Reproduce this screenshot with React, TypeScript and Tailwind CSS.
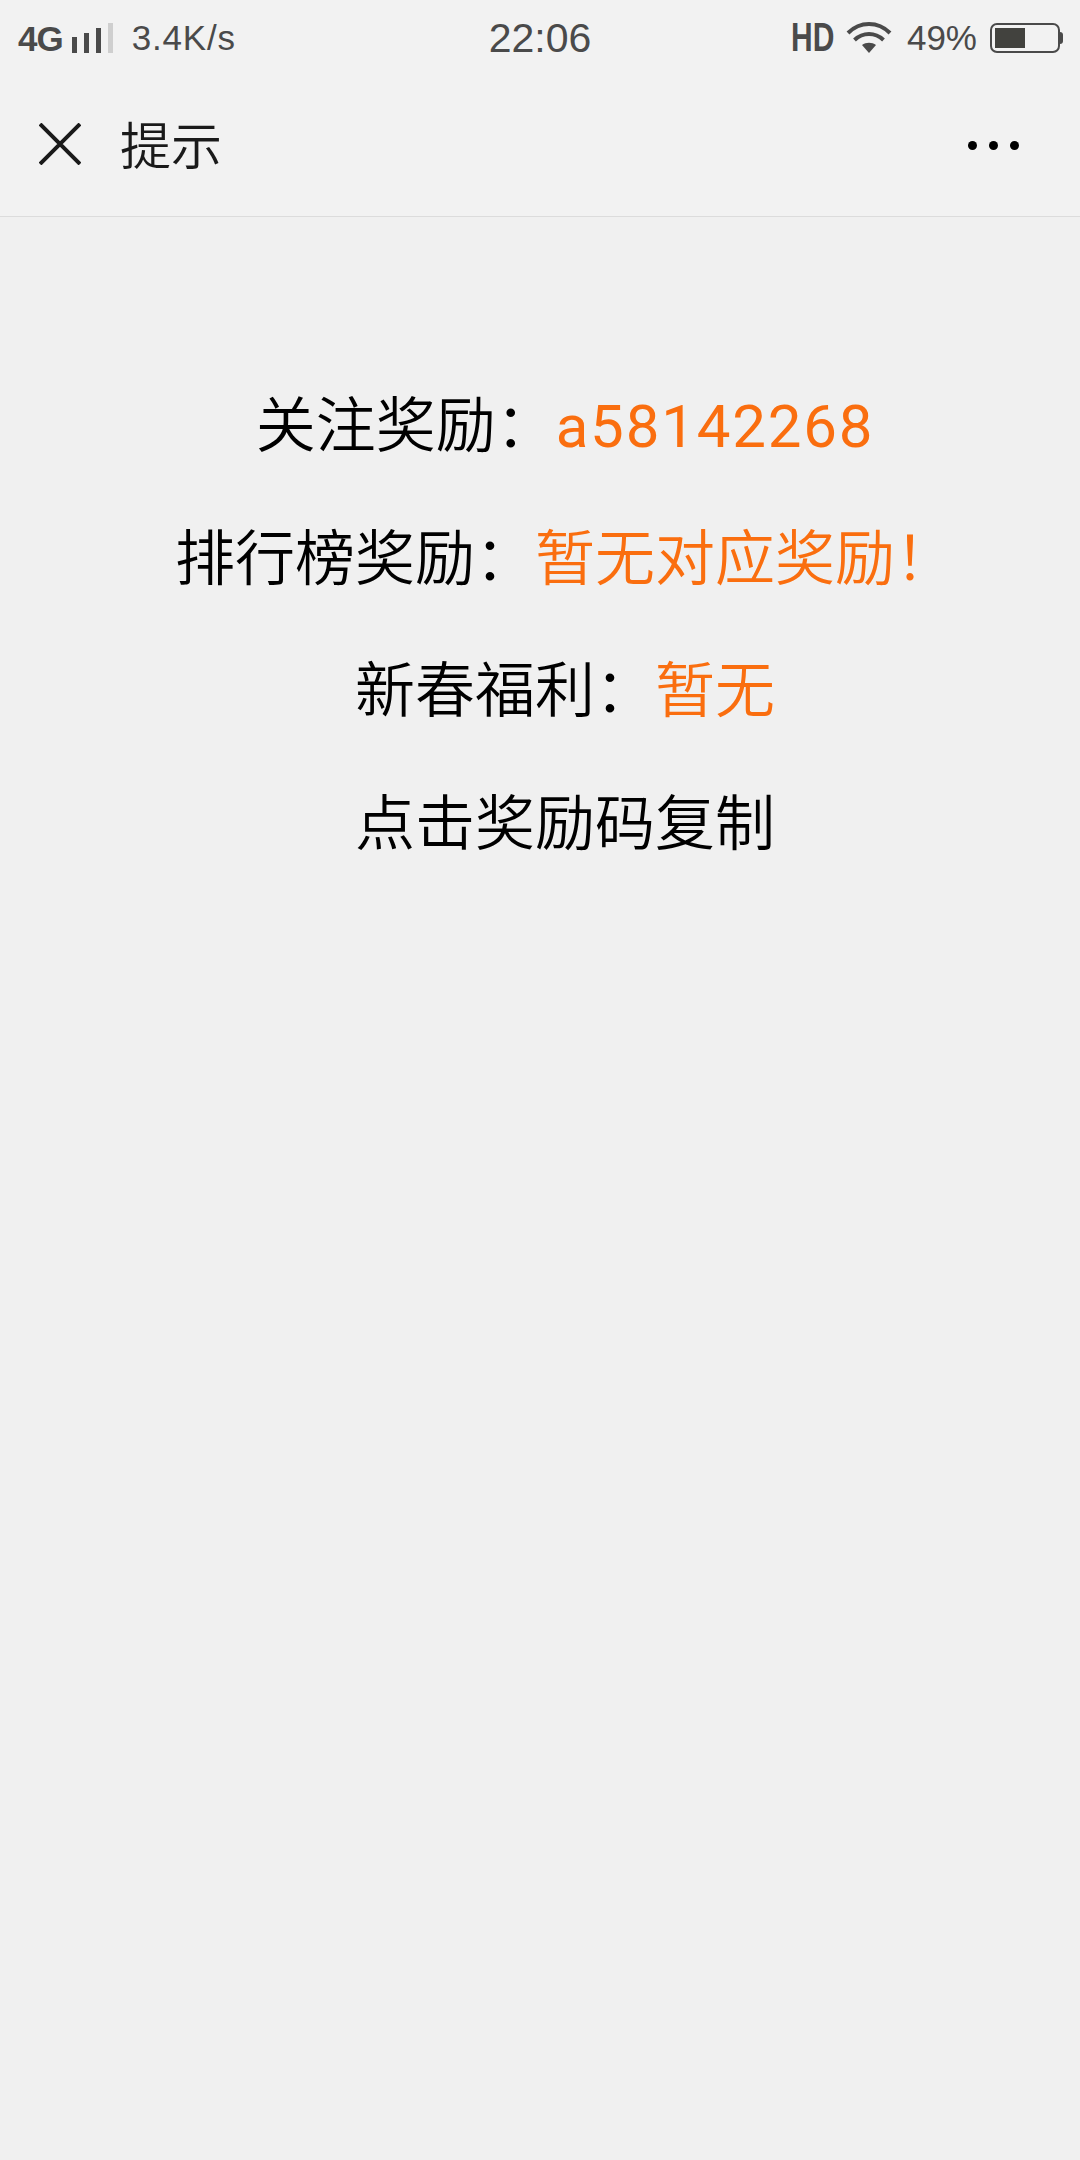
import React from 'react'

const rows = [
  { label: '关注奖励：', value: 'a58142268', latin: true },
  { label: '排行榜奖励：', value: '暂无对应奖励！', latin: false },
  { label: '新春福利：', value: '暂无', latin: false },
  { label: '点击奖励码复制', value: '', latin: false },
]

function SignalBars() {
  return (
    <div className="flex items-end gap-[7px] h-[30px] ml-[9px]">
      <div className="w-[5px] h-[16px] bg-[#4a4a4a]"></div>
      <div className="w-[5px] h-[20px] bg-[#4a4a4a]"></div>
      <div className="w-[5px] h-[25px] bg-[#4a4a4a]"></div>
      <div className="w-[5px] h-[30px] bg-[#cfcfcf]"></div>
    </div>
  )
}

function WifiIcon() {
  return (
    <svg width="46" height="32" viewBox="0 0 46 32" fill="none" stroke="#4a4a4a" strokeWidth="4">
      <path d="M2 11 C14 -1 32 -1 44 11" />
      <path d="M8.500 18 C17 10 29 10 37.500 18" />
      <path d="M16 23 C20 20 26 20 30 23 L23 31 Z" fill="#4a4a4a" stroke="none" />
    </svg>
  )
}

function Battery() {
  return (
    <div className="flex items-center">
      <div className="w-[70px] h-[30px] rounded-[7px] border-[2px] border-[#4a4a4a] p-[3px]">
        <div className="w-[30px] h-full bg-[#42423e]"></div>
      </div>
      <div className="w-[3px] h-[12px] rounded-r-[3px] bg-[#4a4a4a]"></div>
    </div>
  )
}

export default function App() {
  return (
    <div className="min-h-[2160px] bg-[#f0f0f0] font-['Liberation_Sans','Noto_Sans_CJK_SC',sans-serif]">
      {/* Status bar */}
      <div className="bg-[#f2f2f2] h-[76px] grid grid-cols-[1fr_auto_1fr] items-center text-[#4a4a4a] px-[18px]">
        <div className="flex items-center whitespace-nowrap">
          <span className="text-[35px] font-bold leading-none tracking-[-1px]">4G</span>
          <SignalBars />
          <span className="text-[35px] leading-none ml-[19px] tracking-[0.8px] -mt-[2px]">3.4K/s</span>
        </div>
        <div className="text-center text-[41px] leading-none">22:06</div>
        <div className="flex items-center justify-end whitespace-nowrap -mr-[1px]">
          <span className="w-[43px] text-[40px] font-bold leading-none scale-x-[0.75] origin-left -mt-[2px]">HD</span>
          <div className="ml-[12px]"><WifiIcon /></div>
          <span className="text-[35px] leading-none ml-[15px] -mt-[2px]">49%</span>
          <div className="ml-[13px]"><Battery /></div>
        </div>
      </div>

      {/* Nav */}
      <div className="bg-[#f2f2f2] h-[141px] border-b border-[#dcdcdc] flex items-center justify-between pl-[39px] pr-[61px] pb-[5px]">
        <div className="flex items-center">
          <svg width="42" height="42" viewBox="0 0 42 42" stroke="#1a1a1a" strokeWidth="4" fill="none">
            <path d="M1 1 L41 41 M41 1 L1 41" />
          </svg>
          <span className="ml-[39px] mt-[8px] text-[51px] leading-none text-[#1a1a1a] font-[350]">提示</span>
        </div>
        <div className="flex items-center gap-[12px] mt-[4px]">
          <div className="w-[9px] h-[9px] rounded-full bg-black"></div>
          <div className="w-[9px] h-[9px] rounded-full bg-black"></div>
          <div className="w-[9px] h-[9px] rounded-full bg-black"></div>
        </div>
      </div>

      {/* Reward rows */}
      <div className="pt-[144px] pl-[50px] text-center text-[60px] leading-[132.5px] text-black font-[350]">
        {rows.map((row) => (
          <div key={row.label} className="whitespace-nowrap">
            {row.label}
            {row.value && (
              <span className={row.latin ? "text-[#fa6e0f] font-['Roboto',sans-serif] font-normal tracking-[1.8px]" : 'text-[#fa6e0f]'}>
                {row.value}
              </span>
            )}
          </div>
        ))}
      </div>
    </div>
  )
}
